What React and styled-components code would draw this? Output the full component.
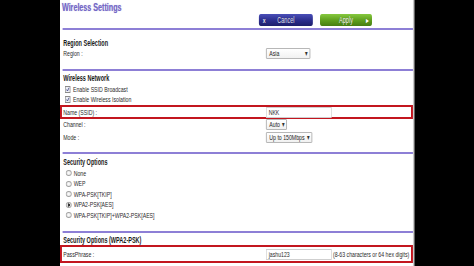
import React from 'react'
import styled, { createGlobalStyle, css } from 'styled-components'

// the reference is a horizontally squashed capture, so the page is laid out
// at its natural width and squeezed by this factor
const SQUASH = 0.65

const GlobalStyle = createGlobalStyle`
  html, body {
    margin: 0;
    padding: 0;
    background: #000;
  }
`

const App = () => (
  <Frame>
    <GlobalStyle />
    <Panel>
      <Header>
        <Title>Wireless Settings</Title>
        <ButtonBar>
          <ActionButton $variant='cancel'>
            <Glyph>x</Glyph>
            <span>Cancel</span>
            <span />
          </ActionButton>
          <ActionButton $variant='apply'>
            <span />
            <span>Apply</span>
            <Glyph>▸</Glyph>
          </ActionButton>
        </ButtonBar>
      </Header>
      <Divider />

      <Section $top={8} $bottom={10}>
        <Heading $lh={10}>Region Selection</Heading>
        <FieldRow $h={11}>
          <Label>Region :</Label>
          <Select $w={68}>Asia</Select>
        </FieldRow>
      </Section>
      <Divider />

      <Section $top={2} $bottom={9}>
        <Heading $lh={11}>Wireless Network</Heading>
        <CheckRow>
          <CheckBox />
          Enable SSID Broadcast
        </CheckRow>
        <CheckRow>
          <CheckBox />
          Enable Wireless Isolation
        </CheckRow>
        <Highlight $h={14}>
          <Label>Name (SSID) :</Label>
          <TextField>NKK</TextField>
        </Highlight>
        <FieldRow $h={11}>
          <Label>Channel :</Label>
          <Select $w={32}>Auto</Select>
        </FieldRow>
        <FieldRow $h={12} $gap={1}>
          <Label>Mode :</Label>
          <Select $w={71}>Up to 150Mbps</Select>
        </FieldRow>
      </Section>
      <Divider />

      <Section $top={3} $bottom={10.5}>
        <Heading $lh={11}>Security Options</Heading>
        {['None', 'WEP', 'WPA-PSK[TKIP]', 'WPA2-PSK[AES]', 'WPA-PSK[TKIP]+WPA2-PSK[AES]'].map(opt => (
          <RadioRow key={opt}>
            <Radio $checked={opt === 'WPA2-PSK[AES]'} />
            {opt}
          </RadioRow>
        ))}
      </Section>
      <Divider />

      <Section $top={3} $bottom={0}>
        <Heading $lh={9}>Security Options (WPA2-PSK)</Heading>
        <Highlight $h={18}>
          <Label>PassPhrase :</Label>
          <TextField>jashu123</TextField>
          <Hint>(8-63 characters or 64 hex digits)</Hint>
        </Highlight>
      </Section>
    </Panel>
  </Frame>
)

const CheckBox = () => (
  <Box>
    <svg width='8' height='7' viewBox='0 0 8 7' preserveAspectRatio='none'>
      <path d='M1.5 3.6 L3.3 5.6 L6.6 1' fill='none' stroke='#2a2f7a' strokeWidth='1.2' />
    </svg>
  </Box>
)

export default App

const Frame = styled.div`
  width: 474px;
  height: 266px;
  overflow: hidden;
  background: #000;
  padding-left: 60px;
  box-sizing: border-box;
`
const Panel = styled.div`
  width: 545px;
  height: 266px;
  background: #fff;
  border-right: 2px solid #c9c9c9;
  box-sizing: border-box;
  transform: scaleX(${SQUASH});
  transform-origin: 0 0;
  font-family: 'Liberation Sans', Arial, sans-serif;
  font-size: 8px;
  color: #222;
  display: flex;
  flex-direction: column;
`
const Header = styled.div`
  height: 28px;
  display: flex;
  flex-direction: column;
`
const Title = styled.div`
  height: 14px;
  padding: 1px 0 0 3px;
  box-sizing: border-box;
  font-size: 11px;
  line-height: 12px;
  font-weight: bold;
  color: #7467c6;
  text-shadow: 0 0 1px rgba(116, 103, 198, 0.5);
`
const ButtonBar = styled.div`
  display: flex;
  gap: 11px;
  padding-left: 306px;
  height: 12px;
`
const ActionButton = styled.div`
  height: 12px;
  border-radius: 3px;
  display: grid;
  grid-template-columns: 16px 1fr 16px;
  align-items: center;
  text-align: center;
  font-size: 8.5px;
  color: #fff;
  text-shadow: 0 0 1px rgba(0, 0, 0, 0.5);
  ${p => p.$variant === 'cancel' && css`
    width: 83px;
    background: linear-gradient(#4a4fb8, #2b2d8c 55%, #1d1e6a);
    color: #e4e4f4;
  `}
  ${p => p.$variant === 'apply' && css`
    width: 80px;
    background: linear-gradient(#86c93f, #5d9d1d 55%, #467d12);
  `}
`
const Glyph = styled.span`
  font-weight: bold;
  font-size: 8px;
`
const Divider = styled.div`
  height: 2px;
  margin-left: 4px;
  background: #8d7fd6;
  flex-shrink: 0;
`
const Section = styled.div`
  padding: ${p => p.$top}px 0 ${p => p.$bottom}px 0;
  display: flex;
  flex-direction: column;
`
const Heading = styled.div`
  padding-left: 5px;
  font-size: 8.5px;
  font-weight: bold;
  line-height: ${p => p.$lh}px;
  color: #1a1a1a;
`
const FieldRow = styled.div`
  display: grid;
  grid-template-columns: 312px auto 1fr;
  align-items: center;
  padding-left: 5px;
  height: ${p => p.$h}px;
  margin-top: ${p => p.$gap || 0}px;
`
const Highlight = styled.div`
  display: grid;
  grid-template-columns: 312px auto 1fr;
  align-items: center;
  height: ${p => p.$h}px;
  box-sizing: border-box;
  border: 2px solid #c3161f;
  border-left-width: 3px;
  border-right-width: 3px;
  padding-left: 2px;
`
const Label = styled.span`
  font-size: 8px;
  color: #2a2a2a;
`
const Select = styled.div`
  width: ${p => p.$w}px;
  height: 11px;
  box-sizing: border-box;
  border: 1px solid #a8a8a8;
  border-radius: 1px;
  background: linear-gradient(#fff, #f1f1f1);
  display: flex;
  align-items: center;
  justify-content: space-between;
  padding: 0 3px 0 4px;
  font-size: 8px;
  line-height: 9px;
  &::after {
    content: '▾';
    font-size: 8px;
    color: #333;
  }
`
const TextField = styled.div`
  width: 101px;
  height: 11px;
  box-sizing: border-box;
  border: 1px solid #cfcfcf;
  padding-left: 3px;
  font-size: 8px;
  line-height: 9px;
  color: #2a2a2a;
`
const Hint = styled.span`
  padding-left: 2px;
  font-size: 8px;
  color: #2a2a2a;
`
const CheckRow = styled.div`
  height: 10.5px;
  display: flex;
  align-items: center;
  padding-left: 8px;
  gap: 4px;
  font-size: 8px;
  color: #2a2a2a;
`
const Box = styled.span`
  width: 8px;
  height: 7px;
  box-sizing: border-box;
  border: 1px solid #8a8a8a;
  background: #eef0f6;
  display: flex;
  svg {
    width: 100%;
    height: 100%;
  }
`
const RadioRow = styled.div`
  height: 10.5px;
  display: flex;
  align-items: center;
  padding-left: 9px;
  gap: 3px;
  font-size: 8px;
  color: #2a2a2a;
`
const Radio = styled.span`
  width: 9px;
  height: 6px;
  box-sizing: border-box;
  border-radius: 50%;
  border: 1px solid #a0a0a0;
  background: ${p => (p.$checked
    ? 'radial-gradient(circle, #333 0 35%, #ddd 45%)'
    : 'radial-gradient(circle, #fff, #ddd)')};
`
